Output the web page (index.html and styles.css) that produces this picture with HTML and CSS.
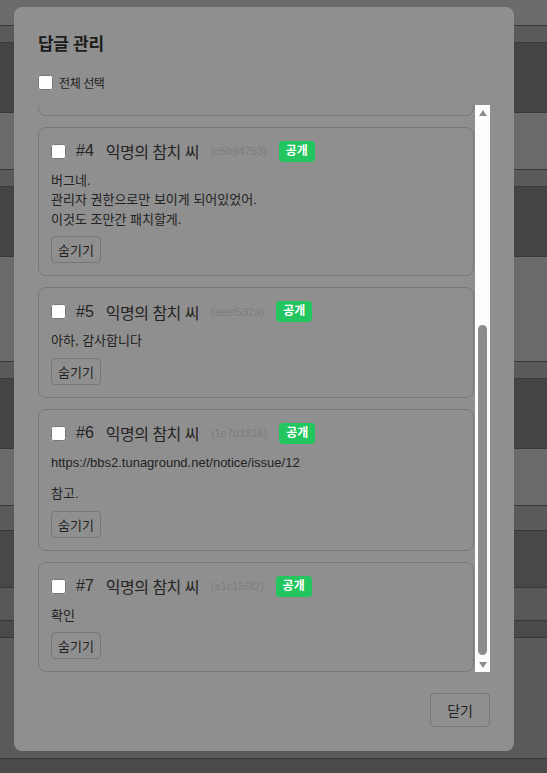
FILE: index.html
```html
<!DOCTYPE html>
<html lang="ko">
<head>
    <meta charset="UTF-8">
    <meta name="viewport" content="width=device-width, initial-scale=1.0">
    <title>답글 관리</title>
    <link rel="stylesheet" href="styles.css">
</head>
<body>
    <!-- Page behind the dimmed overlay -->
    <div class="page">
        <div class="row row-top"></div>
        <div class="row row-head"></div>
        <div class="row row-dark"></div>
        <div class="row row-light"></div>
        <div class="row row-head"></div>
        <div class="row row-dark"></div>
        <div class="row row-light row-tall"></div>
        <div class="row row-head"></div>
        <div class="row row-dark"></div>
        <div class="row row-light"></div>
        <div class="row row-head row-wide"></div>
        <div class="row row-dim"></div>
        <div class="row row-mid"></div>
        <div class="row row-low"></div>
        <div class="row row-rest"></div>
        <div class="row row-bottom"></div>
    </div>

    <!-- Reply manager modal -->
    <div class="modal">
        <h2 class="modal-title">답글 관리</h2>

        <label class="select-all">
            <input type="checkbox">
            <span>전체 선택</span>
        </label>

        <div class="reply-box">
            <div class="reply-list">
                <div class="reply">
                    <div class="reply-head">
                        <input type="checkbox">
                        <span class="reply-no">#3</span>
                        <span class="reply-name">익명의 참치 씨</span>
                        <span class="reply-hash">(7b2e90c1)</span>
                        <span class="badge">공개</span>
                    </div>
                    <div class="reply-body">확인 부탁해.</div>
                    <button class="hide-button">숨기기</button>
                </div>

                <div class="reply">
                    <div class="reply-head">
                        <input type="checkbox">
                        <span class="reply-no">#4</span>
                        <span class="reply-name">익명의 참치 씨</span>
                        <span class="reply-hash">(c5b94753)</span>
                        <span class="badge">공개</span>
                    </div>
                    <div class="reply-body">
                        버그네.<br>
                        관리자 권한으로만 보이게 되어있었어.<br>
                        이것도 조만간 패치할게.
                    </div>
                    <button class="hide-button">숨기기</button>
                </div>

                <div class="reply">
                    <div class="reply-head">
                        <input type="checkbox">
                        <span class="reply-no">#5</span>
                        <span class="reply-name">익명의 참치 씨</span>
                        <span class="reply-hash">(aeef532a)</span>
                        <span class="badge">공개</span>
                    </div>
                    <div class="reply-body">아하, 감사합니다</div>
                    <button class="hide-button">숨기기</button>
                </div>

                <div class="reply">
                    <div class="reply-head">
                        <input type="checkbox">
                        <span class="reply-no">#6</span>
                        <span class="reply-name">익명의 참치 씨</span>
                        <span class="reply-hash">(1e7d1816)</span>
                        <span class="badge">공개</span>
                    </div>
                    <div class="reply-body">
                        <p>https://bbs2.tunaground.net/notice/issue/12</p>
                        <p>참고.</p>
                    </div>
                    <button class="hide-button">숨기기</button>
                </div>

                <div class="reply">
                    <div class="reply-head">
                        <input type="checkbox">
                        <span class="reply-no">#7</span>
                        <span class="reply-name">익명의 참치 씨</span>
                        <span class="reply-hash">(e1c156f2)</span>
                        <span class="badge">공개</span>
                    </div>
                    <div class="reply-body">확인</div>
                    <button class="hide-button">숨기기</button>
                </div>
            </div>

            <!-- Scrollbar, scrolled to the bottom -->
            <div class="scrollbar">
                <span class="arrow-up"></span>
                <div class="track">
                    <div class="thumb"></div>
                </div>
                <span class="arrow-down"></span>
            </div>
        </div>

        <div class="modal-footer">
            <button class="close-button">닫기</button>
        </div>
    </div>
</body>
</html>
```

FILE: styles.css
```css
/* Base */
* {
    box-sizing: border-box;
}

body {
    margin: 0;
    padding: 0;
    height: 100vh;
    overflow: hidden;
    font-family: "Liberation Sans", "Noto Sans CJK KR", sans-serif;
    color: #222;
    background-color: #5a5a5a;
}

/* Page rows behind the overlay */
.page {
    display: flex;
    flex-direction: column;
}

.row {
    border-top: 1px solid #383838;
}

.row-top {
    height: 25px;
    border-top: none;
    background-color: #6b6b6b;
}

.row-head {
    height: 17px;
    background-color: #5a5a5a;
}

.row-wide {
    height: 25px;
}

.row-dark {
    height: 70px;
    background-color: #444;
}

.row-light {
    height: 57px;
    background-color: #6a6a6a;
}

.row-tall {
    height: 105px;
}

.row-dim {
    height: 57px;
    background-color: #484848;
}

.row-mid {
    height: 33px;
    background-color: #585858;
}

.row-low {
    height: 17px;
    background-color: #4a4a4a;
}

.row-rest {
    height: 121px;
    background-color: #5a5a5a;
}

.row-bottom {
    height: 15px;
    background-color: #4a4a4a;
}

/* Modal */
.modal {
    position: fixed;
    top: 7px;
    left: 14px;
    width: 500px;
    height: 744px;
    padding: 26px 24px 24px;
    display: flex;
    flex-direction: column;
    background-color: #8f8f8f;
    border-radius: 8px;
}

.modal-title {
    margin: 0 0 15px;
    font-size: 17px;
    line-height: 24px;
    font-weight: bold;
    letter-spacing: -0.3px;
    color: #1c1c1c;
}

.select-all {
    height: 20px;
    margin-bottom: 13px;
    display: flex;
    align-items: center;
    gap: 6px;
    font-size: 12px;
    letter-spacing: -0.4px;
    color: #1e1e1e;
}

input[type="checkbox"] {
    width: 15px;
    height: 15px;
    margin: 0;
    flex-shrink: 0;
}

/* Scrolling list of replies */
.reply-box {
    flex: 1;
    min-height: 0;
    display: flex;
}

.reply-list {
    flex: 1;
    display: flex;
    flex-direction: column;
    justify-content: flex-end;
    gap: 11px;
    overflow: hidden;
}

.reply {
    flex-shrink: 0;
    padding: 12px;
    display: flex;
    flex-direction: column;
    align-items: flex-start;
    border: 1px solid #777;
    border-radius: 8px;
}

.reply-head {
    height: 23px;
    margin-bottom: 8px;
    display: flex;
    align-items: center;
    gap: 12px;
}

.reply-head input {
    margin-right: -2px;
}

.reply-no {
    font-size: 16px;
    color: #242424;
}

.reply-name {
    font-size: 16px;
    letter-spacing: -0.5px;
    color: #242424;
}

.reply-hash {
    font-size: 11px;
    color: #7d7d7d;
}

.badge {
    padding: 2px 7px;
    font-size: 12px;
    line-height: 17px;
    font-weight: bold;
    color: #fff;
    background-color: #22c55e;
    border-radius: 4px;
}

.reply-body {
    margin-bottom: 7px;
    font-size: 13px;
    line-height: 19.5px;
}

.reply-body p {
    margin: 0;
}

.reply-body p + p {
    margin-top: 12px;
}

.hide-button {
    height: 27px;
    padding: 0 6px;
    font-family: inherit;
    font-size: 13px;
    color: #222;
    background: transparent;
    border: 1px solid #777;
    border-radius: 4px;
}

/* Scrollbar */
.scrollbar {
    width: 15px;
    margin-left: 1px;
    display: flex;
    flex-direction: column;
    align-items: center;
    background-color: #fdfdfd;
}

.arrow-up {
    margin-top: 5px;
    border-left: 4.5px solid transparent;
    border-right: 4.5px solid transparent;
    border-bottom: 6px solid #8c8c8c;
}

.arrow-down {
    margin-bottom: 4px;
    border-left: 4.5px solid transparent;
    border-right: 4.5px solid transparent;
    border-top: 6px solid #8c8c8c;
}

.track {
    flex: 1;
    display: flex;
    flex-direction: column;
    justify-content: flex-end;
    padding-bottom: 7px;
}

.thumb {
    width: 9px;
    height: 330px;
    background-color: #8c8c8c;
    border-radius: 5px;
}

/* Footer */
.modal-footer {
    margin-top: 21px;
    display: flex;
    justify-content: flex-end;
}

.close-button {
    height: 34px;
    padding: 0 16px;
    font-family: inherit;
    font-size: 14px;
    color: #222;
    background: transparent;
    border: 1px solid #777;
    border-radius: 4px;
}
```
